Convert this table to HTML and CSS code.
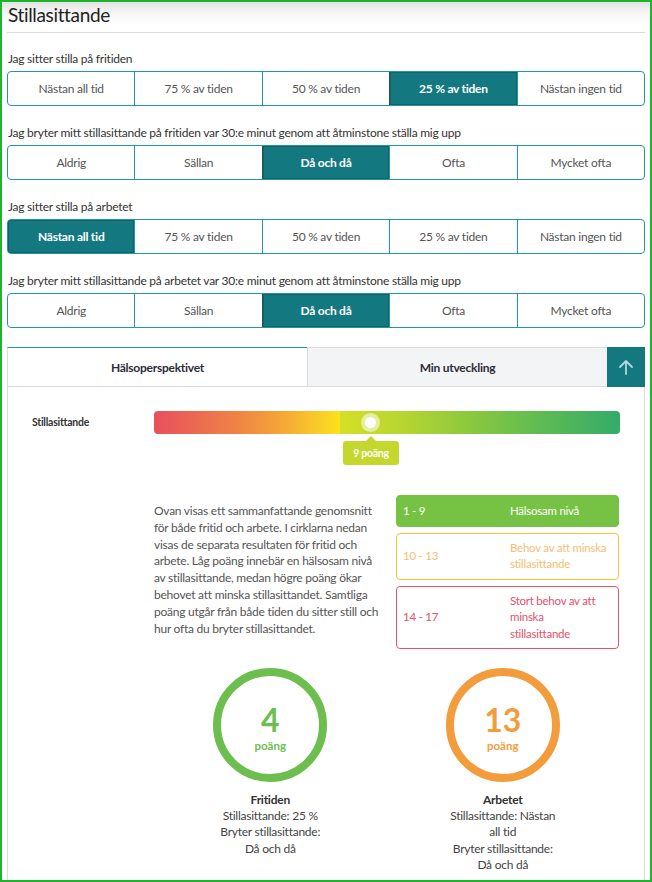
FILE: index.html
```html
<!DOCTYPE html>
<html lang="sv">
<head>
<meta charset="utf-8">
<title>Stillasittande</title>
<link rel="stylesheet" href="styles.css">
</head>
<body>
<div class="frame">
  <div class="page">
    <h1 class="title">Stillasittande</h1>

    <div class="question">
      <div class="q-label">Jag sitter stilla på fritiden</div>
      <div class="seg">
        <div class="opt">Nästan all tid</div>
        <div class="opt">75 % av tiden</div>
        <div class="opt">50 % av tiden</div>
        <div class="opt selected">25 % av tiden</div>
        <div class="opt">Nästan ingen tid</div>
      </div>
    </div>

    <div class="question">
      <div class="q-label">Jag bryter mitt stillasittande på fritiden var 30:e minut genom att åtminstone ställa mig upp</div>
      <div class="seg">
        <div class="opt">Aldrig</div>
        <div class="opt">Sällan</div>
        <div class="opt selected">Då och då</div>
        <div class="opt">Ofta</div>
        <div class="opt">Mycket ofta</div>
      </div>
    </div>

    <div class="question">
      <div class="q-label">Jag sitter stilla på arbetet</div>
      <div class="seg">
        <div class="opt selected">Nästan all tid</div>
        <div class="opt">75 % av tiden</div>
        <div class="opt">50 % av tiden</div>
        <div class="opt">25 % av tiden</div>
        <div class="opt">Nästan ingen tid</div>
      </div>
    </div>

    <div class="question">
      <div class="q-label">Jag bryter mitt stillasittande på arbetet var 30:e minut genom att åtminstone ställa mig upp</div>
      <div class="seg">
        <div class="opt">Aldrig</div>
        <div class="opt">Sällan</div>
        <div class="opt selected">Då och då</div>
        <div class="opt">Ofta</div>
        <div class="opt">Mycket ofta</div>
      </div>
    </div>

    <div class="tabs">
      <div class="tab active">Hälsoperspektivet</div>
      <div class="tab">Min utveckling</div>
      <div class="tab-up">
        <svg width="16" height="16" viewBox="0 0 16 16" aria-hidden="true">
          <path d="M8 15V2M2 8l6-6 6 6" fill="none" stroke="#b4d9dc" stroke-width="1.8" stroke-linecap="round" stroke-linejoin="round"/>
        </svg>
      </div>
    </div>

    <div class="panel">
      <div class="scale-row">
        <div class="scale-label">Stillasittande</div>
        <div class="scale">
          <div class="marker"><div class="marker-dot"></div></div>
          <div class="tip">9 poäng</div>
        </div>
      </div>

      <div class="info">
        <p class="desc">Ovan visas ett sammanfattande genomsnitt för både fritid och arbete. I cirklarna nedan visas de separata resultaten för fritid och arbete. Låg poäng innebär en hälsosam nivå av stillasittande, medan högre poäng ökar behovet att minska stillasittandet. Samtliga poäng utgår från både tiden du sitter still och hur ofta du bryter stillasittandet.</p>
        <div class="legend">
          <div class="lg lg-green"><span class="lg-range">1 - 9</span><span class="lg-text">Hälsosam nivå</span></div>
          <div class="lg lg-yellow"><span class="lg-range">10 - 13</span><span class="lg-text">Behov av att minska stillasittande</span></div>
          <div class="lg lg-red"><span class="lg-range">14 - 17</span><span class="lg-text">Stort behov av att minska<br>stillasittande</span></div>
        </div>
      </div>

      <div class="scores">
        <div class="score">
          <div class="ring ring-green">
            <span class="num">4</span>
            <span class="unit">poäng</span>
          </div>
          <div class="score-text">
            <strong>Fritiden</strong>
            <span>Stillasittande: 25 %</span>
            <span>Bryter stillasittande: Då och då</span>
          </div>
        </div>
        <div class="score">
          <div class="ring ring-orange">
            <span class="num">13</span>
            <span class="unit">poäng</span>
          </div>
          <div class="score-text">
            <strong>Arbetet</strong>
            <span>Stillasittande: Nästan all tid</span>
            <span>Bryter stillasittande: Då och då</span>
          </div>
        </div>
      </div>
    </div>
  </div>
</div>
</body>
</html>
```

FILE: styles.css
```css
* { box-sizing: border-box; }

html, body {
  margin: 0;
  padding: 0;
  background: #fff;
}

body {
  font-family: Lato, "Source Sans Pro", "Noto Sans", sans-serif;
  color: #333;
  letter-spacing: -0.25px;
}

.frame {
  width: 652px;
  height: 882px;
  border: 2px solid #1cb52c;
  overflow: hidden;
}

.page {
  height: 100%;
  padding: 0 5px;
  background: linear-gradient(#e4e4e4 0, #f7f7f7 12px, #fff 24px);
}

.title {
  margin: 0;
  padding: 1px 1px 0;
  height: 31px;
  font-size: 19px;
  line-height: 24px;
  font-weight: 400;
  color: #222;
  letter-spacing: -0.35px;
  border-bottom: 1px solid #dcdcdc;
}

.question {
  margin-top: 18px;
}

.question + .question {
  margin-top: 19px;
}

.q-label {
  font-size: 12px;
  line-height: 16px;
  color: #333;
  padding-left: 1px;
  margin-bottom: 4px;
}

.seg {
  display: flex;
  height: 35px;
  border: 1px solid #1e9aa5;
  border-radius: 4px;
  overflow: hidden;
}

.opt {
  flex: 1 1 0;
  display: flex;
  align-items: center;
  justify-content: center;
  font-size: 12px;
  color: #555;
  border-left: 1px solid #1e9aa5;
}

.opt:first-child {
  border-left: none;
}

.opt.selected {
  background: #13787f;
  color: #fff;
  font-weight: 700;
  border-left-color: #16585e;
  box-shadow: inset 0 0 0 1px #186066;
}

.tabs {
  display: flex;
  margin-top: 19px;
  height: 40px;
}

.tab {
  flex: 1 1 0;
  display: flex;
  align-items: center;
  justify-content: center;
  font-size: 12px;
  font-weight: 700;
  color: #2d2d3a;
  background: #f3f4f6;
  border-top: 1px solid #dcdcdc;
  border-bottom: 1px solid #dcdcdc;
  border-left: 1px solid #dcdcdc;
}

.tab.active {
  background: #fff;
  border-top: 1px solid #1e9aa5;
}

.tab-up {
  width: 38px;
  display: flex;
  align-items: center;
  justify-content: center;
  background: #13787f;
}

.panel {
  border-left: 1px solid #dcdcdc;
  border-right: 1px solid #dcdcdc;
  padding: 24px 24px 0 24px;
  height: 600px;
}

.scale-row {
  display: grid;
  grid-template-columns: 122px 1fr;
  align-items: center;
}

.scale-label {
  font-size: 10.5px;
  font-weight: 700;
  color: #333;
  line-height: 23px;
}

.scale {
  position: relative;
  height: 23px;
  border-radius: 4px;
  background: linear-gradient(to right,
    #e84f5d 0%, #ef8445 18%, #f5a936 28%, #fbe21d 40%,
    #d6df25 40%, #b2d432 55%, #8ac83e 68%, #5cba55 84%, #34ab69 100%);
}

.marker {
  position: absolute;
  left: 207px;
  top: 2px;
  width: 19px;
  height: 19px;
  border-radius: 50%;
  background: rgba(255, 255, 255, 0.55);
  display: flex;
  align-items: center;
  justify-content: center;
}

.marker-dot {
  width: 11px;
  height: 11px;
  border-radius: 50%;
  background: #fff;
}

.tip {
  position: absolute;
  left: 189px;
  top: 30px;
  width: 56px;
  height: 24px;
  border-radius: 3px;
  background: #c3d72d;
  color: #fff;
  font-size: 10.5px;
  font-weight: 700;
  display: flex;
  align-items: center;
  justify-content: center;
}

.tip::before {
  content: "";
  position: absolute;
  top: -5px;
  left: 23px;
  border-left: 5px solid transparent;
  border-right: 5px solid transparent;
  border-bottom: 5px solid #c3d72d;
}

.info {
  display: grid;
  grid-template-columns: 232px 223px;
  column-gap: 10px;
  margin-top: 61px;
  margin-left: 122px;
}

.desc {
  margin: 8px 0 0;
  font-size: 12px;
  line-height: 16.8px;
  color: #555;
}

.legend {
  display: flex;
  flex-direction: column;
  gap: 6px;
}

.lg {
  display: flex;
  align-items: center;
  border: 1px solid;
  border-radius: 4px;
  padding: 6px 4px 6px 6px;
  font-size: 11.5px;
  line-height: 16.5px;
}

.lg-range {
  width: 107px;
  flex: none;
}

.lg-text {
  flex: 1;
}

.lg-green {
  background: #76c244;
  border-color: #76c244;
  color: #fff;
  padding-top: 7px;
  padding-bottom: 6px;
}

.lg-yellow {
  border-color: #f6c531;
  color: #f7bd72;
}

.lg-red {
  border-color: #e8506a;
  color: #e5506b;
}

.scores {
  display: grid;
  grid-template-columns: 1fr 1fr;
  margin-top: 19px;
  margin-left: 122px;
  width: 465px;
}

.score {
  display: flex;
  flex-direction: column;
  align-items: center;
}

.ring {
  width: 114px;
  height: 114px;
  border-radius: 50%;
  border: 8px solid;
  padding-top: 2px;
  display: flex;
  flex-direction: column;
  align-items: center;
  justify-content: center;
  font-weight: 700;
  letter-spacing: 0;
}

.ring-green {
  border-color: #6cbf4e;
  color: #6cbf4e;
}

.ring-orange {
  border-color: #f39c3c;
  color: #f39c3c;
}

.num {
  font-size: 32px;
  line-height: 39px;
}

.unit {
  font-size: 11.5px;
  line-height: 14px;
}

.score-text {
  margin-top: 10px;
  width: 112px;
  text-align: center;
  font-size: 12px;
  line-height: 16.2px;
  color: #444;
  display: flex;
  flex-direction: column;
}

.score-text strong {
  font-weight: 700;
  color: #333;
}
```
